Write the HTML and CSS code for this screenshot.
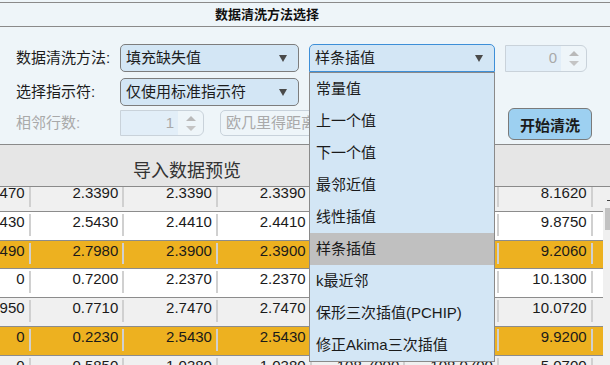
FILE: index.html
```html
<!DOCTYPE html>
<html lang="zh-CN">
<head>
  <meta charset="UTF-8" />
  <title>数据清洗</title>
  <link rel="stylesheet" href="styles.css">
</head>
<body>

  <div class="title-bar">数据清洗方法选择</div>

  <!-- method selection panel -->
  <div class="controls">
    <div class="ctrl-row">
      <span class="label">数据清洗方法:</span>
      <div class="dropdown w-method"><span>填充缺失值</span><i class="caret"></i></div>
      <div class="dropdown open w-sub">
        <span>样条插值</span><i class="caret"></i>
        <ul class="menu">
          <li>常量值</li>
          <li>上一个值</li>
          <li>下一个值</li>
          <li>最邻近值</li>
          <li>线性插值</li>
          <li class="selected">样条插值</li>
          <li>k最近邻</li>
          <li>保形三次插值(PCHIP)</li>
          <li>修正Akima三次插值</li>
        </ul>
      </div>
      <div class="spinner w-const">
        <span class="spin-value">0</span>
        <span class="spin-arrows"><i class="up"></i><i class="down"></i></span>
      </div>
    </div>

    <div class="ctrl-row row-2">
      <span class="label">选择指示符:</span>
      <div class="dropdown w-method"><span>仅使用标准指示符</span><i class="caret"></i></div>
    </div>

    <div class="ctrl-row row-3">
      <span class="label disabled">相邻行数:</span>
      <div class="spinner w-rows">
        <span class="spin-value">1</span>
        <span class="spin-arrows"><i class="up"></i><i class="down"></i></span>
      </div>
      <div class="dropdown disabled w-dist"><span>欧几里得距离</span></div>
      <button class="btn-start">开始清洗</button>
    </div>
  </div>

  <!-- imported data preview -->
  <div class="preview">
    <div class="preview-title">导入数据预览</div>
    <div class="preview-body">
      <div class="grid-view">
        <div class="grid">
          <div class="grid-row gray">
            <span class="cell">2.3470</span><span class="cell">2.3390</span><span class="cell">2.3390</span><span class="cell">2.3390</span><span class="cell">100.9000</span><span class="cell">100.8400</span><span class="cell">8.1620</span><span class="cell"></span>
          </div>
          <div class="grid-row white">
            <span class="cell">2.5430</span><span class="cell">2.5430</span><span class="cell">2.4410</span><span class="cell">2.4410</span><span class="cell">102.3000</span><span class="cell">102.2100</span><span class="cell">9.8750</span><span class="cell"></span>
          </div>
          <div class="grid-row orange">
            <span class="cell">2.7490</span><span class="cell">2.7980</span><span class="cell">2.3900</span><span class="cell">2.3900</span><span class="cell">104.1000</span><span class="cell">104.0500</span><span class="cell">9.2060</span><span class="cell"></span>
          </div>
          <div class="grid-row white">
            <span class="cell">0</span><span class="cell">0.7200</span><span class="cell">2.2370</span><span class="cell">2.2370</span><span class="cell">105.6000</span><span class="cell">105.4800</span><span class="cell">10.1300</span><span class="cell"></span>
          </div>
          <div class="grid-row gray">
            <span class="cell">0.7950</span><span class="cell">0.7710</span><span class="cell">2.7470</span><span class="cell">2.7470</span><span class="cell">106.9000</span><span class="cell">106.7200</span><span class="cell">10.0720</span><span class="cell"></span>
          </div>
          <div class="grid-row orange">
            <span class="cell">0</span><span class="cell">0.2230</span><span class="cell">2.5430</span><span class="cell">2.5430</span><span class="cell">107.8000</span><span class="cell">107.6600</span><span class="cell">9.9200</span><span class="cell"></span>
          </div>
          <div class="grid-row gray">
            <span class="cell">0</span><span class="cell">0.5850</span><span class="cell">1.0380</span><span class="cell">1.0380</span><span class="cell">108.7000</span><span class="cell">108.0700</span><span class="cell">5.0700</span><span class="cell"></span>
          </div>
        </div>
      </div>
      <div class="vscroll">
        <i class="vscroll-arrow"></i>
        <i class="vscroll-thumb"></i>
      </div>
    </div>
  </div>

</body>
</html>
```

FILE: styles.css
```css
body {
  margin: 0;
  width: 610px;
  height: 365px;
  overflow: hidden;
  background: #eef5f9;
  color: #1c1c1c;
  font-family: "Liberation Sans", "Noto Sans CJK SC", sans-serif;
}

.title-bar {
  margin-top: 2px;
  height: 23px;
  padding-right: 76px;
  border-top: 1px solid #8a8a8a;
  border-bottom: 1px solid #8a8a8a;
  line-height: 23px;
  font-size: 13px;
  font-weight: bold;
  text-align: center;
  color: #111;
}

.controls {
  height: 100px;
  padding-top: 17px;
  border-bottom: 1px solid #8a8a8a;
}

.ctrl-row {
  display: flex;
  align-items: center;
  height: 28px;
  padding: 0 18px 0 16px;
  font-size: 15px;
}

.row-2 {
  margin-top: 6px;
}

.row-3 {
  margin-top: 4px;
  height: 26px;
}

.label {
  flex: none;
  width: 104px;
  line-height: 20px;
}

.label.disabled {
  color: #a9a9a9;
}

/* dropdowns */
.dropdown {
  position: relative;
  flex: none;
  box-sizing: border-box;
  height: 28px;
  display: flex;
  align-items: center;
  justify-content: space-between;
  padding: 0 11px 0 5px;
  background: #d3e6f5;
  border: 1px solid #7d7d7d;
  border-radius: 5px;
  line-height: 20px;
  white-space: nowrap;
}

.w-method {
  width: 179px;
}

.w-sub {
  width: 186px;
  margin-left: 10px;
}

.dropdown.open {
  border-color: #3d8fd8;
  border-radius: 5px 5px 0 0;
}

.dropdown.disabled {
  height: 26px;
  width: 190px;
  margin-left: 16px;
  background: #eef5f9;
  border-color: #c8d2db;
  color: #a9a9a9;
  overflow: hidden;
}

.caret {
  width: 0;
  height: 0;
  border-left: 4px solid transparent;
  border-right: 4px solid transparent;
  border-top: 7px solid #4a4a4a;
}

.menu {
  position: absolute;
  left: -1px;
  top: 27px;
  z-index: 5;
  box-sizing: border-box;
  width: 186px;
  height: 290px;
  margin: 0;
  padding: 0;
  list-style: none;
  background: #d3e6f5;
  border: 1px solid #8a8a8a;
}

.menu li {
  height: 32px;
  line-height: 32px;
  padding-left: 6px;
  color: #1a1a1a;
}

.menu li.selected {
  background: #c0c0c0;
}

/* spinners (disabled look) */
.spinner {
  flex: none;
  box-sizing: border-box;
  display: flex;
  height: 27px;
  border: 1px solid #c9d2da;
  border-radius: 0 6px 6px 0;
  color: #a9a9a9;
}

.w-const {
  width: 82px;
  margin-left: 10px;
}

.w-rows {
  width: 84px;
  height: 26px;
}

.spin-value {
  flex: 1;
  padding-right: 4px;
  background: #e2eef8;
  text-align: right;
  line-height: 24px;
}

.spin-arrows {
  width: 25px;
  display: flex;
  flex-direction: column;
  align-items: center;
  justify-content: center;
  gap: 5px;
}

.spin-arrows .up {
  border-left: 5px solid transparent;
  border-right: 5px solid transparent;
  border-bottom: 5px solid #b9b9b9;
}

.spin-arrows .down {
  border-left: 5px solid transparent;
  border-right: 5px solid transparent;
  border-top: 5px solid #c4c4c4;
}

.btn-start {
  flex: none;
  margin-left: auto;
  margin-top: 2px;
  box-sizing: border-box;
  width: 84px;
  height: 32px;
  padding: 0;
  background: #9dd0f1;
  border: 1px solid #7a7a7a;
  border-radius: 6px;
  font-family: inherit;
  font-size: 15px;
  font-weight: bold;
  color: #1b1b1b;
}

/* preview table */
.preview-title {
  box-sizing: border-box;
  height: 42px;
  padding: 16px 0 0 133px;
  background: #e6e6e6;
  border-bottom: 1px solid #8a8a8a;
  font-size: 18px;
  line-height: 20px;
  color: #333;
}

.preview-body {
  display: flex;
  height: 178px;
}

.grid-view {
  width: 603px;
  overflow: hidden;
}

.grid {
  margin: -4px 0 0 -63px;
}

.grid-row {
  display: flex;
  box-sizing: border-box;
  height: 28.8px;
  border-bottom: 1px solid #8c8c8c;
}

.grid-row.white {
  background: #fff;
}

.grid-row.gray {
  background: #f0f0f0;
}

.grid-row.orange {
  background: #edb120;
}

.cell {
  flex: none;
  box-sizing: border-box;
  width: 93.67px;
  margin: 2px 0 4px;
  padding-right: 4px;
  border-right: 2px solid #d0d0d0;
  text-align: right;
  font-size: 15px;
  line-height: 16px;
  color: #1a1a1a;
}

.vscroll {
  width: 7px;
  display: flex;
  flex-direction: column;
  background: #f0f0f0;
}

.vscroll-arrow {
  width: 3px;
  height: 1px;
  margin: 13px 0 0 4px;
  background: #444;
}

.vscroll-thumb {
  width: 5px;
  height: 22px;
  margin: 7px 0 0 2px;
  background: #c2c2c2;
}
```
